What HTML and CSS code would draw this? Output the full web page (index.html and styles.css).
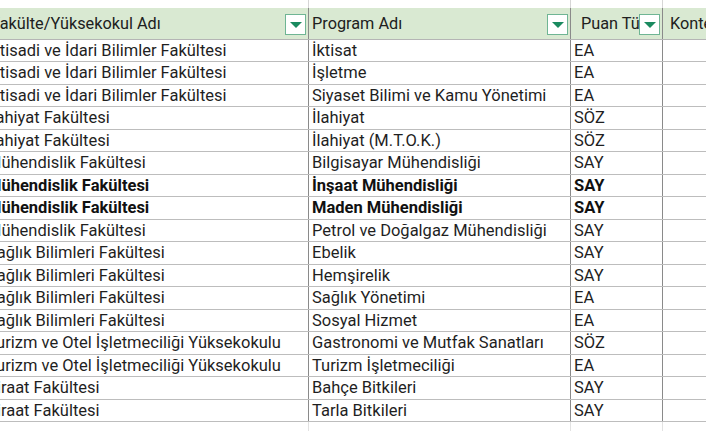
FILE: index.html
```html
<!DOCTYPE html>
<html lang="tr">
<head>
<meta charset="utf-8">
<title>Program Listesi</title>
<link rel="stylesheet" href="styles.css">
</head>
<body>
<div class="sheet">
  <div class="row top">
    <div class="cell"></div><div class="cell"></div><div class="cell"></div><div class="cell"></div>
  </div>
  <div class="row head">
    <div class="cell c1">Fakülte/Yüksekokul Adı<span class="filter"></span></div>
    <div class="cell c2">Program Adı<span class="filter"></span></div>
    <div class="cell c3">Puan Türü<span class="filter"></span></div>
    <div class="cell c4">Kontenjan</div>
  </div>
  <div class="row"><div class="cell">İktisadi ve İdari Bilimler Fakültesi</div><div class="cell">İktisat</div><div class="cell">EA</div><div class="cell"></div></div>
  <div class="row"><div class="cell">İktisadi ve İdari Bilimler Fakültesi</div><div class="cell">İşletme</div><div class="cell">EA</div><div class="cell"></div></div>
  <div class="row"><div class="cell">İktisadi ve İdari Bilimler Fakültesi</div><div class="cell">Siyaset Bilimi ve Kamu Yönetimi</div><div class="cell">EA</div><div class="cell"></div></div>
  <div class="row"><div class="cell">İlahiyat Fakültesi</div><div class="cell">İlahiyat</div><div class="cell">SÖZ</div><div class="cell"></div></div>
  <div class="row"><div class="cell">İlahiyat Fakültesi</div><div class="cell">İlahiyat (M.T.O.K.)</div><div class="cell">SÖZ</div><div class="cell"></div></div>
  <div class="row"><div class="cell">Mühendislik Fakültesi</div><div class="cell">Bilgisayar Mühendisliği</div><div class="cell">SAY</div><div class="cell"></div></div>
  <div class="row bold"><div class="cell">Mühendislik Fakültesi</div><div class="cell">İnşaat Mühendisliği</div><div class="cell">SAY</div><div class="cell"></div></div>
  <div class="row bold"><div class="cell">Mühendislik Fakültesi</div><div class="cell">Maden Mühendisliği</div><div class="cell">SAY</div><div class="cell"></div></div>
  <div class="row"><div class="cell">Mühendislik Fakültesi</div><div class="cell">Petrol ve Doğalgaz Mühendisliği</div><div class="cell">SAY</div><div class="cell"></div></div>
  <div class="row"><div class="cell">Sağlık Bilimleri Fakültesi</div><div class="cell">Ebelik</div><div class="cell">SAY</div><div class="cell"></div></div>
  <div class="row"><div class="cell">Sağlık Bilimleri Fakültesi</div><div class="cell">Hemşirelik</div><div class="cell">SAY</div><div class="cell"></div></div>
  <div class="row"><div class="cell">Sağlık Bilimleri Fakültesi</div><div class="cell">Sağlık Yönetimi</div><div class="cell">EA</div><div class="cell"></div></div>
  <div class="row"><div class="cell">Sağlık Bilimleri Fakültesi</div><div class="cell">Sosyal Hizmet</div><div class="cell">EA</div><div class="cell"></div></div>
  <div class="row"><div class="cell">Turizm ve Otel İşletmeciliği Yüksekokulu</div><div class="cell">Gastronomi ve Mutfak Sanatları</div><div class="cell">SÖZ</div><div class="cell"></div></div>
  <div class="row"><div class="cell">Turizm ve Otel İşletmeciliği Yüksekokulu</div><div class="cell">Turizm İşletmeciliği</div><div class="cell">EA</div><div class="cell"></div></div>
  <div class="row"><div class="cell">Ziraat Fakültesi</div><div class="cell">Bahçe Bitkileri</div><div class="cell">SAY</div><div class="cell"></div></div>
  <div class="row"><div class="cell">Ziraat Fakültesi</div><div class="cell">Tarla Bitkileri</div><div class="cell">SAY</div><div class="cell"></div></div>
  <div class="row bottom">
    <div class="cell"></div><div class="cell"></div><div class="cell"></div><div class="cell"></div>
  </div>
</div>
</body>
</html>
```

FILE: styles.css
```css
html, body {
  margin: 0;
  padding: 0;
  background: #ffffff;
  overflow: hidden;
}

body {
  font-family: Roboto, "Noto Sans", "Liberation Sans", sans-serif;
  color: #1f1f1f;
}

.sheet {
  margin-left: -16px;
  width: 760px;
}

.row {
  display: grid;
  grid-template-columns: 325px 262px 92px 81px;
  height: 22.5px;
  box-sizing: border-box;
  border-bottom: 1px solid #bdbdbd;
}

.cell {
  position: relative;
  box-sizing: border-box;
  border-right: 1px solid #8a8a8a;
  padding-left: 3px;
  overflow: hidden;
  white-space: nowrap;
  font-size: 16.5px;
  line-height: 22px;
}

.row .cell + .cell {
  padding-left: 3px;
}

.row.top {
  height: 8px;
  border-bottom: none;
}

.row.top .cell {
  border-right-color: #d6d6d6;
}

.row.bottom {
  height: 12px;
  border-bottom: none;
}

.row.bottom .cell {
  border-right-color: #e2e2e2;
}

.row.head {
  height: 31.5px;
  background: #d9e9d2;
  border-bottom: 1px solid #b5b5b5;
}

.row.head .cell {
  font-size: 16.3px;
  line-height: 31px;
  color: #202020;
}

.row.head .c1 {
  padding-left: 7px;
}

.row.head .c2 {
  padding-left: 3px;
}

.row.head .c3 {
  padding-left: 10px;
}

.row.head .c4 {
  padding-left: 7px;
}

.filter {
  position: absolute;
  right: 2px;
  top: 6px;
  width: 21px;
  height: 21px;
  box-sizing: border-box;
  background: #ffffff;
  border: 1px solid #6fb594;
  display: flex;
  align-items: center;
  justify-content: center;
}

.filter::after {
  content: "";
  width: 0;
  height: 0;
  border-left: 6px solid transparent;
  border-right: 6px solid transparent;
  border-top: 6px solid #1a8a5f;
  margin-top: 1px;
}

.row.bold .cell {
  font-weight: 700;
  color: #111111;
}
```
